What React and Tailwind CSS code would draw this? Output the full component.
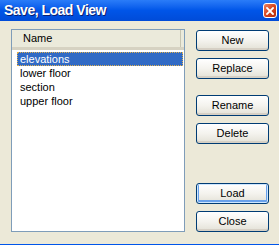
import React from 'react';

const items = ['elevations', 'lower floor', 'section', 'upper floor'];

function XpButton({ label, isDefault }) {
  return (
    <button
      className={`w-[73px] h-[21px] rounded-[3px] border border-[#003c74] text-[11px] text-black leading-none flex items-center justify-center bg-gradient-to-b from-[#ffffff] via-[#f4f3ee] to-[#e3e1d6] ${
        isDefault ? 'shadow-[inset_0_0_0_1px_#cee7ff,inset_0_-1px_0_2px_#69a1ea]' : 'shadow-[inset_0_-2px_0_#d6d0c5]'
      }`}
    >
      {label}
    </button>
  );
}

export default function App() {
  return (
    <div className="w-[279px] h-[245px] flex flex-col bg-[#ece9d8] font-['Liberation_Sans',Arial,sans-serif] overflow-hidden">
      {/* Title bar */}
      <div className="h-[21px] shrink-0 flex items-center justify-between pl-[4px] pr-[2px] bg-gradient-to-b from-[#2a7cf8] via-[#0055e8] to-[#004bd8]">
        <span className="text-white font-bold text-[14px] tracking-[-0.5px] [text-shadow:1px_1px_0_#0a1e70]">
          Save, Load View
        </span>
        <div className="w-[14px] h-[15px] rounded-[3px] border border-white bg-gradient-to-br from-[#e9805e] via-[#d8461f] to-[#b02b0e] flex items-center justify-center">
          <svg width="8" height="8" viewBox="0 0 8 8">
            <path d="M1 1 L7 7 M7 1 L1 7" stroke="white" strokeWidth="1.8" strokeLinecap="square" />
          </svg>
        </div>
      </div>

      {/* Body */}
      <div className="flex-1 flex pl-[11px] pt-[8px]">
        {/* List view */}
        <div className="w-[174px] h-[203px] border border-[#7f9db9] bg-white flex flex-col">
          <div className="h-[20px] flex items-stretch bg-[#ebeadb] border-b-[3px] border-[#d6d2c2]">
            <div className="w-[169px] flex items-center pl-[11px] text-[11px] text-black border-r border-[#c7c5b2]">
              Name
            </div>
          </div>
          <div className="flex flex-col pt-[2px] pl-[5px] pr-[1px] text-[11px]">
            {items.map((item, i) => (
              <div
                key={item}
                className={`h-[14px] flex items-center pl-[3px] ${
                  i === 0 ? 'bg-[#316ac5] text-white outline outline-1 outline-dotted outline-[#e0b050] -outline-offset-1' : 'text-black'
                }`}
              >
                {item}
              </div>
            ))}
          </div>
        </div>

        {/* Buttons */}
        <div className="flex flex-col ml-[11px] pt-[1px]">
          <XpButton label="New" />
          <div className="h-[7px]" />
          <XpButton label="Replace" />
          <div className="h-[16px]" />
          <XpButton label="Rename" />
          <div className="h-[7px]" />
          <XpButton label="Delete" />
          <div className="h-[39px]" />
          <XpButton label="Load" isDefault />
          <div className="h-[7px]" />
          <XpButton label="Close" />
        </div>
      </div>

      <div className="h-[1px] shrink-0 bg-[#0055ea]" />
    </div>
  );
}
